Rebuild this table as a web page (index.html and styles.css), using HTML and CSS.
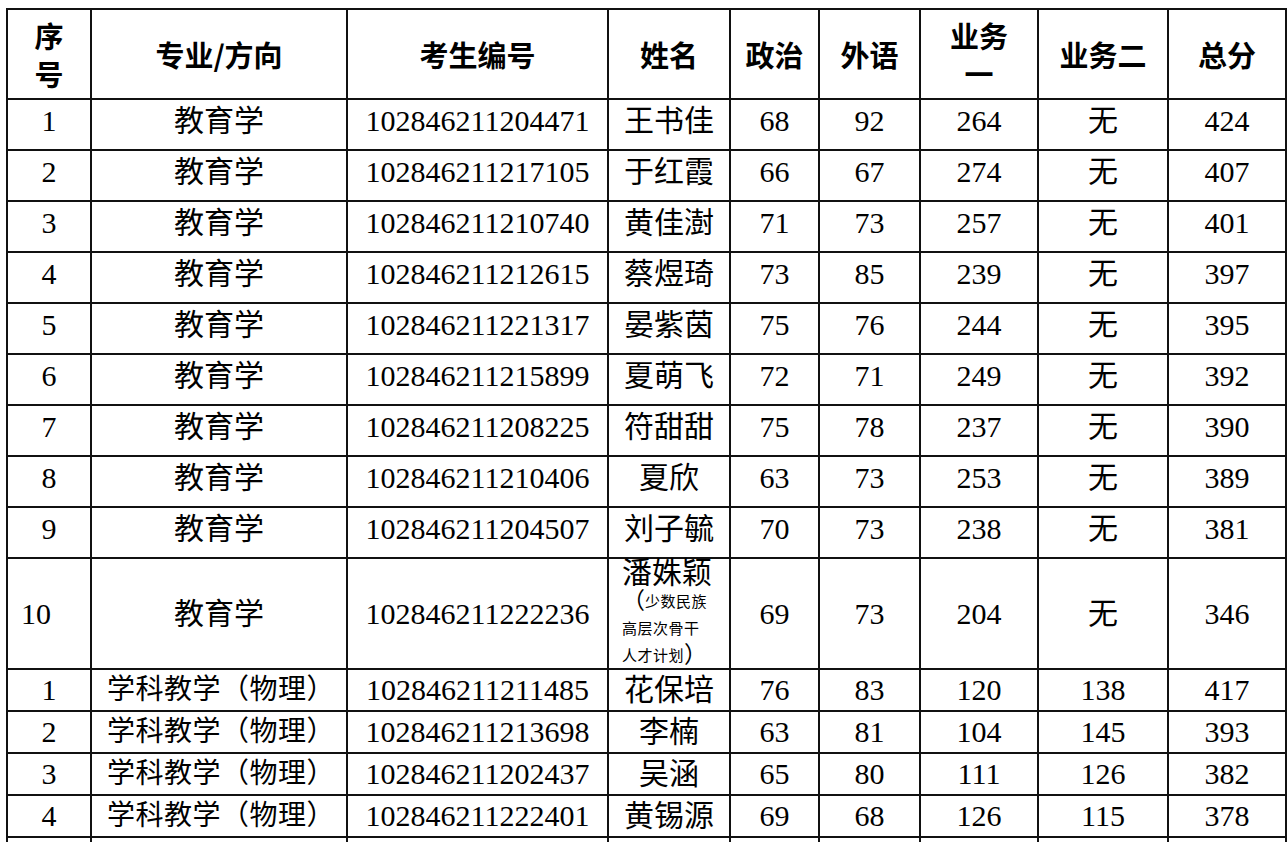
FILE: index.html
```html
<!DOCTYPE html>
<html lang="zh-CN">
<head>
<meta charset="utf-8">
<title>成绩表</title>
<link rel="stylesheet" href="styles.css">
</head>
<body>
<table class="score-table">
  <colgroup>
    <col class="c-no"><col class="c-major"><col class="c-id"><col class="c-name"><col class="c-pol"><col class="c-lang"><col class="c-b1"><col class="c-b2"><col class="c-total">
  </colgroup>
  <thead>
    <tr class="head-row">
      <th>序<br>号</th><th>专业/方向</th><th>考生编号</th><th>姓名</th><th>政治</th><th>外语</th><th>业务<br>一</th><th>业务二</th><th>总分</th>
    </tr>
  </thead>
  <tbody>
    <tr class="row-a"><td>1</td><td>教育学</td><td>102846211204471</td><td>王书佳</td><td>68</td><td>92</td><td>264</td><td>无</td><td>424</td></tr>
    <tr class="row-a"><td>2</td><td>教育学</td><td>102846211217105</td><td>于红霞</td><td>66</td><td>67</td><td>274</td><td>无</td><td>407</td></tr>
    <tr class="row-a"><td>3</td><td>教育学</td><td>102846211210740</td><td>黄佳澍</td><td>71</td><td>73</td><td>257</td><td>无</td><td>401</td></tr>
    <tr class="row-a"><td>4</td><td>教育学</td><td>102846211212615</td><td>蔡煜琦</td><td>73</td><td>85</td><td>239</td><td>无</td><td>397</td></tr>
    <tr class="row-a"><td>5</td><td>教育学</td><td>102846211221317</td><td>晏紫茵</td><td>75</td><td>76</td><td>244</td><td>无</td><td>395</td></tr>
    <tr class="row-a"><td>6</td><td>教育学</td><td>102846211215899</td><td>夏萌飞</td><td>72</td><td>71</td><td>249</td><td>无</td><td>392</td></tr>
    <tr class="row-a"><td>7</td><td>教育学</td><td>102846211208225</td><td>符甜甜</td><td>75</td><td>78</td><td>237</td><td>无</td><td>390</td></tr>
    <tr class="row-a"><td>8</td><td>教育学</td><td>102846211210406</td><td>夏欣</td><td>63</td><td>73</td><td>253</td><td>无</td><td>389</td></tr>
    <tr class="row-a"><td>9</td><td>教育学</td><td>102846211204507</td><td>刘子毓</td><td>70</td><td>73</td><td>238</td><td>无</td><td>381</td></tr>
    <tr class="row-tall"><td class="left-no">10</td><td>教育学</td><td>102846211222236</td><td class="name-note"><div class="nm">潘姝颖</div><div class="note"><span class="paren">（</span>少数民族<br>高层次骨干<br>人才计划<span class="paren">）</span></div></td><td>69</td><td>73</td><td>204</td><td>无</td><td>346</td></tr>
    <tr class="row-b"><td>1</td><td class="major-b">学科教学（物理）</td><td>102846211211485</td><td>花保培</td><td>76</td><td>83</td><td>120</td><td>138</td><td>417</td></tr>
    <tr class="row-b"><td>2</td><td class="major-b">学科教学（物理）</td><td>102846211213698</td><td>李楠</td><td>63</td><td>81</td><td>104</td><td>145</td><td>393</td></tr>
    <tr class="row-b"><td>3</td><td class="major-b">学科教学（物理）</td><td>102846211202437</td><td>吴涵</td><td>65</td><td>80</td><td>111</td><td>126</td><td>382</td></tr>
    <tr class="row-b"><td>4</td><td class="major-b">学科教学（物理）</td><td>102846211222401</td><td>黄锡源</td><td>69</td><td>68</td><td>126</td><td>115</td><td>378</td></tr>
    <tr class="row-b"><td></td><td></td><td></td><td></td><td></td><td></td><td></td><td></td><td></td></tr>
  </tbody>
</table>
</body>
</html>
```
FILE: styles.css
```css
html, body {
  margin: 0;
  padding: 0;
  background: #ffffff;
  overflow: hidden;
}

.score-table {
  margin: 8px 0 0 6px;
  width: 1279px;
  table-layout: fixed;
  border-collapse: collapse;
  color: #000;
  font-family: "Liberation Serif", "Noto Sans CJK SC", serif;
  font-size: 30px;
  text-spacing-trim: space-all;
}

.c-no { width: 84px; }
.c-major { width: 256px; }
.c-id { width: 261px; }
.c-name { width: 122px; }
.c-pol { width: 89px; }
.c-lang { width: 101px; }
.c-b1 { width: 118px; }
.c-b2 { width: 130px; }
.c-total { width: 118px; }

.score-table th,
.score-table td {
  border: 2px solid #111;
  padding: 0;
  text-align: center;
  vertical-align: middle;
  white-space: nowrap;
  overflow: hidden;
}

.score-table th {
  font-family: "Noto Sans CJK SC", sans-serif;
  font-weight: 700;
  font-size: 29px;
  line-height: 38px;
}

.head-row { height: 90px; }

.row-a { height: 51px; }
.row-a td {
  line-height: 30px;
  padding-bottom: 7px;
}

.row-tall { height: 111px; }
.row-tall td { line-height: 30px; }

.row-b { height: 42px; }
.row-b td { line-height: 30px; }

.major-b {
  font-size: 28px;
  letter-spacing: 0.5px;
  padding-left: 4px !important;
}

.left-no {
  text-align: left !important;
  padding-left: 13px !important;
}

.score-table td.name-note {
  overflow: visible;
}

.name-note .nm {
  line-height: 28px;
  padding-right: 4px;
}

.name-note .note {
  font-family: "Noto Sans CJK SC", sans-serif;
  font-size: 15px;
  line-height: 27px;
  text-align: left;
  padding-left: 13px;
  letter-spacing: 0.5px;
  text-spacing-trim: space-all;
}

.note .paren {
  font-size: 23px;
  line-height: 18px;
  letter-spacing: 0;
  vertical-align: -2px;
}
```
